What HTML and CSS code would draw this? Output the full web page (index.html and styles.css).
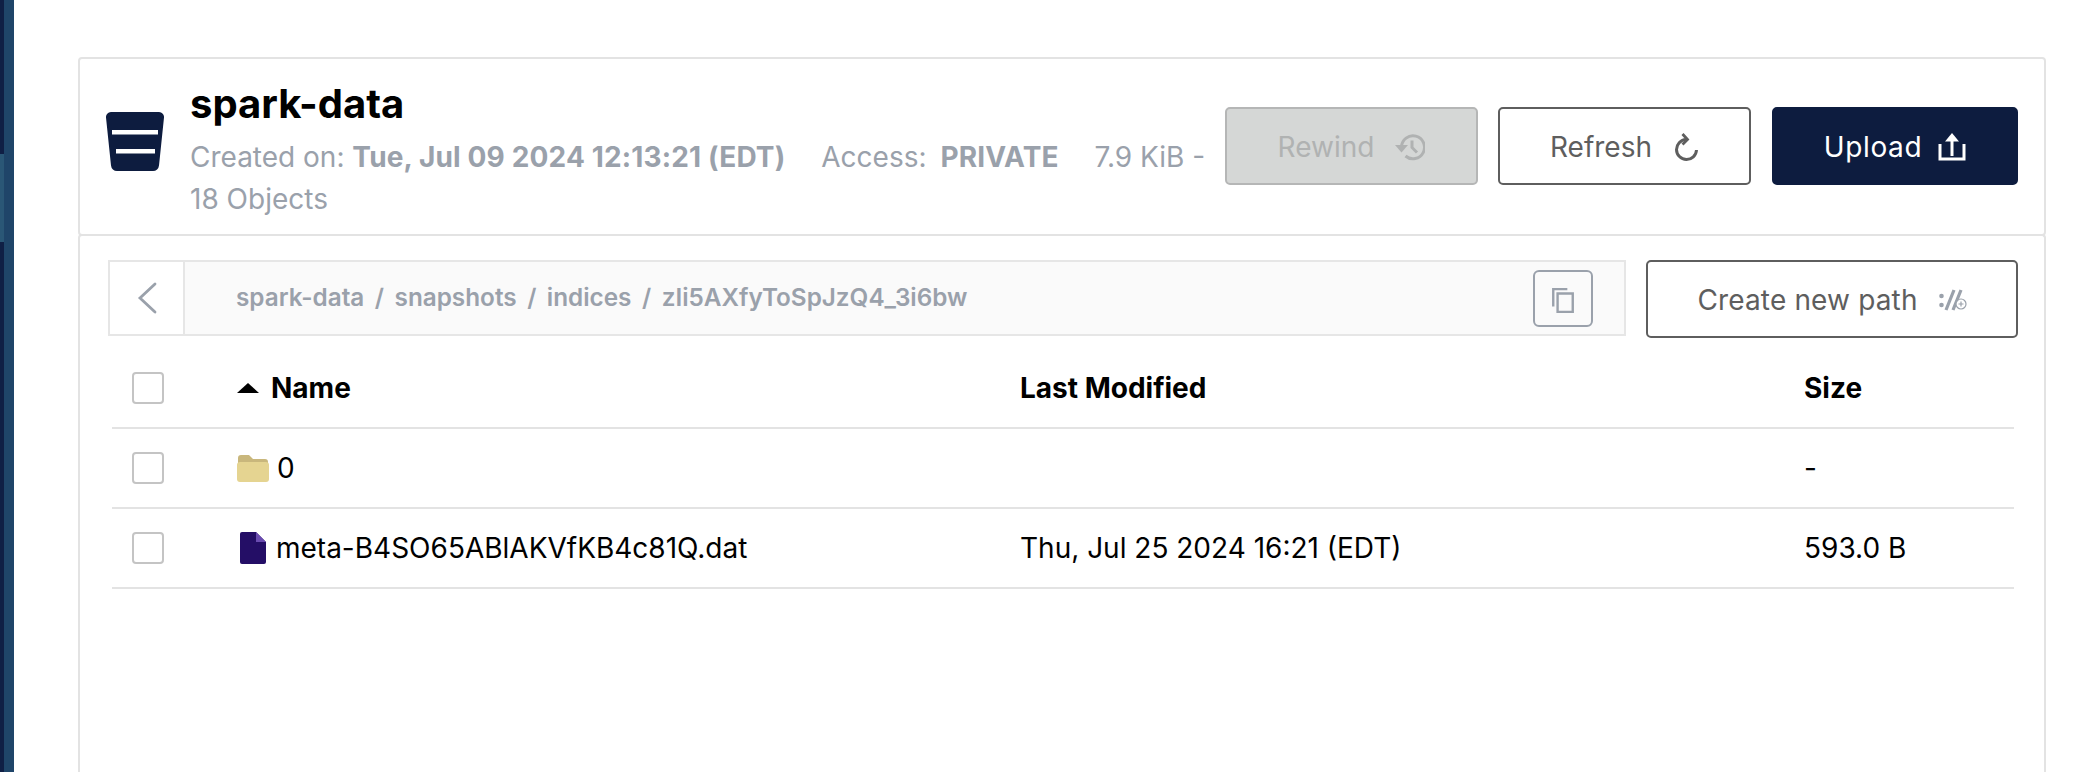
FILE: index.html
```html
<!DOCTYPE html>
<html lang="en">
<head>
  <meta charset="UTF-8">
  <title>spark-data</title>
  <link rel="stylesheet" href="styles.css">
</head>
<body>
  <div class="sidebar"><div class="sidebar-rail"><div class="sidebar-active"></div></div></div>

  <main class="content">
    <section class="bucket-header">
      <svg class="bucket-icon" viewBox="0 0 58 59">
        <path fill="#0d1c3f" d="M5 0h48a5 5 0 0 1 5 5.500l-5 48a6 6 0 0 1-6 5.500H11a6 6 0 0 1-6-5.500L0 5.500A5 5 0 0 1 5 0z"/>
        <path fill="#fff" d="M6 18h46v4.500H6zM10 37h39v4.500H10z"/>
      </svg>
      <div class="bucket-info">
        <h1>spark-data</h1>
        <div class="bucket-meta">
          <span class="meta-item">Created on: <strong>Tue, Jul 09 2024 12:13:21 (EDT)</strong></span>
          <span class="meta-item">Access: <strong class="access-value">PRIVATE</strong></span>
          <span>7.9 KiB -</span> <span>18 Objects</span>
        </div>
      </div>
      <div class="actions">
        <button class="btn btn-disabled">Rewind
          <svg viewBox="0 0 30 28" class="btn-icon"><path fill="none" stroke="currentColor" stroke-width="3" d="M6.500 14a11.500 11.500 0 1 1 4 9M17 7.500v7l5 5"/><path fill="currentColor" d="M0 12h13l-6.500 7.500z"/></svg>
        </button>
        <button class="btn btn-outline">Refresh
          <svg viewBox="0 0 26 28" class="refresh-icon"><path fill="none" stroke="currentColor" stroke-width="3" d="M13 6.500a10 10 0 1 0 10.500 10.500"/><path fill="none" stroke="currentColor" stroke-width="2.800" d="M9.500 1l5 5.500-5 5"/></svg>
        </button>
        <button class="btn btn-primary">Upload
          <svg viewBox="0 0 28 28" class="upload-icon"><path fill="none" stroke="currentColor" stroke-width="3" d="M2 11v15h24V11M14 23V4"/><path fill="currentColor" d="M14 0l7 8.500H7z"/></svg>
        </button>
      </div>
    </section>

    <section class="browser">
      <div class="path-row">
        <div class="breadcrumb">
          <div class="back-cell">
            <svg viewBox="0 0 20 32" class="back-icon"><path fill="none" stroke="#9aa1ab" stroke-width="2.800" stroke-linecap="round" d="M18 2L3 16l15 14"/></svg>
          </div>
          <div class="crumbs">
            <span>spark-data</span><span class="crumb-sep">/</span><span>snapshots</span><span class="crumb-sep">/</span><span>indices</span><span class="crumb-sep">/</span><span>zIi5AXfyToSpJzQ4_3i6bw</span>
          </div>
          <button class="copy-btn">
            <svg viewBox="0 0 22 24" class="copy-icon"><path fill="none" stroke="#9aa1ab" stroke-width="2.200" d="M2 18V2h13"/><path fill="none" stroke="#9aa1ab" stroke-width="2.200" d="M6 6h14v17H6z"/></svg>
          </button>
        </div>
        <button class="btn btn-outline btn-path">Create new path
          <svg viewBox="0 0 28 24" class="path-icon">
            <circle cx="2.500" cy="8" r="2.300" fill="#9aa1ab"/><circle cx="2.500" cy="17" r="2.300" fill="#9aa1ab"/>
            <path fill="none" stroke="#9aa1ab" stroke-width="3.200" d="M15 2L7 22M22 2l-8 20"/>
            <circle cx="22" cy="16" r="5" fill="#fff" stroke="#9aa1ab" stroke-width="1.200"/>
            <path stroke="#9aa1ab" stroke-width="1.200" d="M19.500 16h5M22 13.500v5"/>
          </svg>
        </button>
      </div>

      <div class="row row-head">
        <span class="check"></span>
        <span class="cell-name"><i class="sort-up"></i>Name</span>
        <span>Last Modified</span>
        <span>Size</span>
      </div>
      <div class="row">
        <span class="check"></span>
        <span class="cell-name">
          <svg viewBox="0 0 32 27" class="folder-icon"><path fill="#c9b77c" d="M1 24V3a3 3 0 0 1 3-3h8l4 4h12a3 3 0 0 1 3 3v10z"/><path fill="#e5d491" d="M0 10a3 3 0 0 1 3-3h26a3 3 0 0 1 3 3v14a3 3 0 0 1-3 3H3a3 3 0 0 1-3-3z"/></svg>
          0
        </span>
        <span></span>
        <span>-</span>
      </div>
      <div class="row">
        <span class="check"></span>
        <span class="cell-name">
          <svg viewBox="0 0 26 32" class="file-icon"><path fill="#240e66" d="M2 0h14l10 10v20a2 2 0 0 1-2 2H2a2 2 0 0 1-2-2V2a2 2 0 0 1 2-2z"/><path fill="#6a4bb0" d="M16 0l10 10H16z"/></svg>
          meta-B4SO65ABlAKVfKB4c81Q.dat
        </span>
        <span>Thu, Jul 25 2024 16:21 (EDT)</span>
        <span>593.0 B</span>
      </div>
    </section>
  </main>
</body>
</html>
```

FILE: styles.css
```css
* {
  box-sizing: border-box;
}
body {
  margin: 0;
  display: flex;
  height: 772px;
  overflow: hidden;
  background: #fff;
  font-family: Inter, "Liberation Sans", sans-serif;
  color: #000;
}
.sidebar {
  width: 14px;
  flex: none;
  background: #0f1f45;
  padding-left: 4px;
}
.sidebar-rail {
  height: 100%;
  background: #1f4569;
  padding-top: 154px;
}
.sidebar-active {
  height: 88px;
  margin-left: -4px;
  width: 4px;
  background: #2a5776;
}
.content {
  flex: 1;
  display: flex;
  flex-direction: column;
  padding: 57px 40px 0 64px;
  min-width: 0;
}
.bucket-header {
  display: flex;
  align-items: center;
  height: 179px;
  flex: none;
  padding: 0 26px;
  border: 2px solid #e3e3e3;
  border-radius: 4px;
}
.bucket-icon {
  width: 58px;
  height: 59px;
  flex: none;
  margin-top: -10px;
}
.bucket-info {
  flex: 1;
  min-width: 0;
  margin-left: 26px;
  padding: 18px 12px 12px 0;
}
h1 {
  margin: 0;
  font-size: 40px;
  line-height: 47px;
  font-weight: 700;
}
.bucket-meta {
  margin-top: 9px;
  font-size: 28px;
  line-height: 42px;
  color: #9aa1ab;
}
.meta-item {
  margin-right: 28px;
}
.bucket-meta strong {
  font-weight: 700;
  letter-spacing: 0.150px;
}
.bucket-meta .access-value {
  margin-left: 6px;
}
.actions {
  display: flex;
  gap: 20px;
  flex: none;
  margin-top: -1px;
}
.btn {
  display: flex;
  align-items: center;
  justify-content: center;
  gap: 21px;
  width: 253px;
  height: 78px;
  padding-top: 2px;
  border-radius: 5px;
  font-family: inherit;
  font-size: 28px;
  background: #fff;
}
.btn-disabled {
  background: #d5d7d6;
  border: 2px solid #b5b6b6;
  color: #b0b2b2;
}
.btn-outline {
  border: 2px solid #5e5e5e;
  color: #5e5e5e;
}
.btn-primary {
  width: 246px;
  margin-left: 1px;
  gap: 16px;
  letter-spacing: 0.600px;
  background: #0d1c3f;
  border: 2px solid #0d1c3f;
  color: #fff;
}
.btn-icon {
  width: 30px;
  height: 28px;
}
.refresh-icon {
  width: 26px;
  height: 28px;
}
.upload-icon {
  width: 28px;
  height: 28px;
}
.browser {
  flex: 1;
  margin-top: -2px;
  padding: 24px 26px 0 30px;
  border: 2px solid #e3e3e3;
  border-bottom: 0;
  border-radius: 4px 4px 0 0;
}
.path-row {
  display: flex;
  justify-content: space-between;
  align-items: flex-start;
}
.breadcrumb {
  display: flex;
  align-items: center;
  width: 1518px;
  height: 76px;
  background: #fafafa;
  border: 2px solid #e6e6e6;
  margin-left: -2px;
}
.back-cell {
  display: flex;
  align-items: center;
  justify-content: center;
  width: 75px;
  height: 100%;
  background: #fff;
  border-right: 2px solid #e6e6e6;
}
.back-icon {
  width: 20px;
  height: 32px;
}
.crumbs {
  flex: 1;
  padding: 0 0 2px 51px;
  font-size: 24.300px;
  font-weight: 600;
  color: #9aa1ab;
}
.crumb-sep {
  margin: 0 10.500px;
}
.copy-btn {
  display: flex;
  align-items: center;
  justify-content: center;
  width: 60px;
  height: 57px;
  margin-right: 31px;
  padding: 3px 0 0;
  background: transparent;
  border: 2px solid #9aa1ab;
  border-radius: 6px;
}
.copy-icon {
  width: 24px;
  height: 26px;
}
.btn-path {
  width: 372px;
  letter-spacing: 0.150px;
  color: #5e5e5e;
}
.path-icon {
  width: 28px;
  height: 24px;
}
.row {
  display: grid;
  grid-template-columns: 125px 783px 784px 1fr;
  align-items: center;
  height: 80px;
  margin: 0 4px 0 2px;
  border-bottom: 2px solid #e3e3e3;
  font-size: 28px;
}
.row-head {
  height: 91px;
  padding-top: 10px;
  font-weight: 700;
}
.check {
  width: 32px;
  height: 32px;
  margin-left: 20px;
  background: #fff;
  border: 2px solid #c4c4c4;
  border-radius: 4px;
}
.cell-name {
  display: flex;
  align-items: center;
}
.sort-up {
  width: 0;
  height: 0;
  margin-right: 12px;
  border-left: 11px solid transparent;
  border-right: 11px solid transparent;
  border-bottom: 10px solid #000;
}
.folder-icon {
  width: 32px;
  height: 27px;
  margin-right: 8px;
}
.file-icon {
  width: 26px;
  height: 32px;
  margin: 0 10px 0 3px;
}
```
